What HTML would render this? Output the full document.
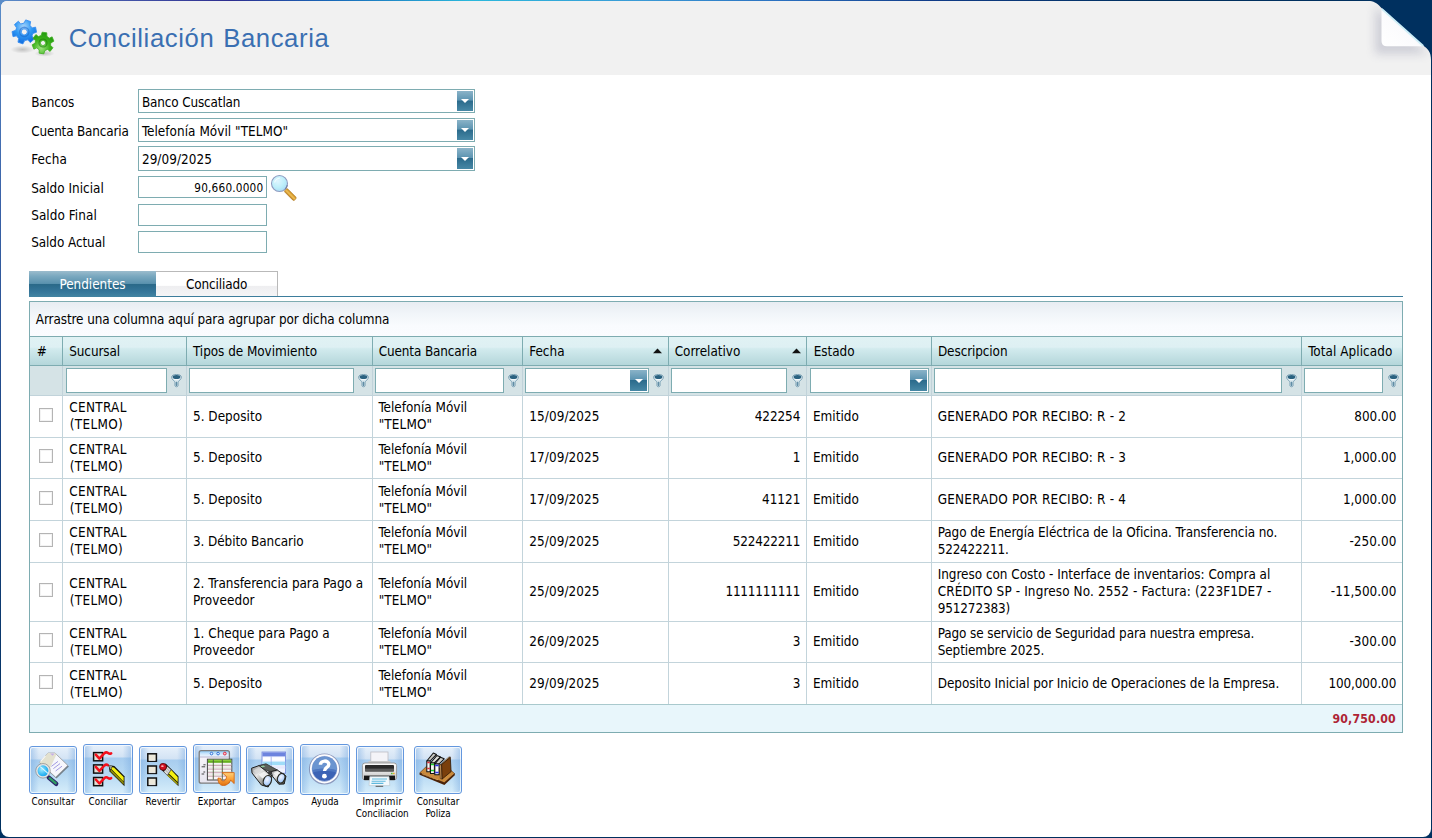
<!DOCTYPE html>
<html lang="es"><head><meta charset="utf-8"><title>Conciliación Bancaria</title>
<style>
html,body{margin:0;padding:0;}
body{background:#00305f;width:1432px;height:838px;overflow:hidden;font-family:"DejaVu Sans Condensed","Liberation Sans",sans-serif;font-size:13px;color:#000;}
#pg{position:relative;width:1432px;height:838px;overflow:hidden;}
#pg div,#pg span.t,#pg svg{position:absolute;}
#pg div{box-sizing:border-box;}
span.t{white-space:nowrap;}
.ed{border:1px solid #7eacb1;background:#fff;}
.ddb{background:linear-gradient(#8ab3c8 0%,#5c94b1 46%,#2b6b8c 50%,#4788a6 100%);}
.ddb:after{content:"";position:absolute;left:50%;top:50%;margin:-2px 0 0 -4px;border:4px solid transparent;border-top:4px solid #fff;border-bottom:0;}
.hl{background:#7eacb1;}
.vl{background:#c3d4db;}
.cb{border:1px solid #b4b4b4;background:#fff;box-shadow:inset 0 0 0 1px #f3f3f3;}
.btn{border:1px solid #6397de;border-radius:3px;box-shadow:inset 0 0 0 1px rgba(255,255,255,.5);background:linear-gradient(#e6f0fa 0px,#d3e3f4 12px,#a8cdef 13px,#b7d9f3 60%,#d6edfa 100%);}
.btn:before{content:"";position:absolute;left:1px;right:1px;top:1px;bottom:1px;background:linear-gradient(90deg,rgba(120,170,225,.45),rgba(255,255,255,0) 18%,rgba(255,255,255,0) 82%,rgba(120,170,225,.45));border-radius:2px;}

</style></head>
<body>
<div id="pg">
<div style="left:0;top:0;width:1432px;height:1px;background:linear-gradient(90deg,#5a8cc8 0px,#4a62b0 90px,#2e2e90 230px,#1868b8 330px,#2ab8dc 470px,#3a9ad6 640px,#2a70c0 780px,#103c88 930px,#00305f 1150px)"></div>
<div style="left:0;top:0;width:8px;height:8px;background:#5a8cc8"></div>
<div style="left:0;top:1px;width:1px;height:837px;background:linear-gradient(#5a8cc8 0px,#3a62a8 200px,#1a4482 450px,#00305f 760px)"></div>
<div style="left:1px;top:1px;width:1430px;height:836px;background:#fff;border-radius:6px 0 8px 8px;overflow:hidden"><div style="left:0;top:0;width:1430px;height:74px;background:#f1f1f1"></div></div>
<svg style="left:1342px;top:0" width="90" height="80" viewBox="1342 0 90 80">
<defs>
<filter id="cbl" x="-50%" y="-50%" width="200%" height="200%"><feGaussianBlur stdDeviation="5"/></filter>
<clipPath id="ccp"><path d="M1342 1 L1370 1 C1375 1.5 1378 4 1382 8.5 L1423 45.5 C1428 49 1431 52 1431 60 L1431 80 L1342 80 Z"/></clipPath>
<linearGradient id="cf" x1="0" y1="1" x2="1" y2="0"><stop offset="0" stop-color="#ffffff"/><stop offset=".45" stop-color="#fbfbfd"/><stop offset=".8" stop-color="#eceef5"/><stop offset="1" stop-color="#dfe6f0"/></linearGradient>
</defs>
<path d="M1371 0 L1432 0 L1432 60 L1431 60 C1431 52 1428 49 1423 45.5 L1382 8.5 C1378 4 1375 1.5 1370 1 Z" fill="#00305f"/>
<g clip-path="url(#ccp)"><path d="M1375 6 L1428 54 L1375 54 Z" fill="#8486a0" opacity=".31" filter="url(#cbl)"/></g>
<path d="M1381.5 8.5 L1423.5 46.3 L1387 46.3 Q1381.5 46.3 1381.5 41 Z" fill="url(#cf)"/>
<path d="M1381.8 8.8 L1423.3 46" stroke="#cdeef7" stroke-width="1.8" fill="none"/>
</svg>
<svg style="left:6.6px;top:15px" width="52" height="46" viewBox="0 0 52 46">
<defs>
<radialGradient id="gb" cx=".4" cy=".3" r=".8"><stop offset="0" stop-color="#a8d4fb"/><stop offset=".45" stop-color="#2f9af5"/><stop offset="1" stop-color="#0a5fd8"/></radialGradient>
<radialGradient id="gg" cx=".45" cy=".75" r=".8"><stop offset="0" stop-color="#9be37c"/><stop offset=".5" stop-color="#3fb41e"/><stop offset="1" stop-color="#1d960c"/></radialGradient>
<radialGradient id="gs"><stop offset="0" stop-color="#000" stop-opacity=".2"/><stop offset="1" stop-color="#000" stop-opacity="0"/></radialGradient>
</defs>
<ellipse cx="15.5" cy="34.5" rx="12" ry="4" fill="url(#gs)"/>
<ellipse cx="37.5" cy="38.5" rx="10" ry="3.2" fill="url(#gs)"/>
<g transform="translate(17.3,16.9) rotate(19)">
<path id="gear" d="M-2.6,-11.8 L2.6,-11.8 L3.2,-8.1 L6.1,-6.3 L9.1,-8.2 L11.7,-3.7 L8.6,-1.3 L8.6,1.3 L11.7,3.7 L9.1,8.2 L6.1,6.3 L3.2,8.1 L2.6,11.8 L-2.6,11.8 L-3.2,8.1 L-6.1,6.3 L-9.1,8.2 L-11.7,3.7 L-8.6,1.3 L-8.6,-1.3 L-11.7,-3.7 L-9.1,-8.2 L-6.1,-6.3 L-3.2,-8.1 Z M0,-3 A3,3 0 1 0 0.01,-3 Z" fill="url(#gb)" fill-rule="evenodd" stroke="#3a8ff0" stroke-width=".8" stroke-linejoin="round"/>
<circle r="4.6" fill="none" stroke="#1b62c9" stroke-opacity=".55" stroke-width="1.4"/>
</g>
<g transform="translate(36,28) rotate(8) scale(.9)">
<path d="M-2.6,-11.8 L2.6,-11.8 L3.2,-8.1 L6.1,-6.3 L9.1,-8.2 L11.7,-3.7 L8.6,-1.3 L8.6,1.3 L11.7,3.7 L9.1,8.2 L6.1,6.3 L3.2,8.1 L2.6,11.8 L-2.6,11.8 L-3.2,8.1 L-6.1,6.3 L-9.1,8.2 L-11.7,3.7 L-8.6,1.3 L-8.6,-1.3 L-11.7,-3.7 L-9.1,-8.2 L-6.1,-6.3 L-3.2,-8.1 Z M0,-2.8 A2.8,2.8 0 1 0 0.01,-2.8 Z" fill="url(#gg)" fill-rule="evenodd" stroke="#3cae1f" stroke-width=".8" stroke-linejoin="round"/>
<circle r="4.4" fill="none" stroke="#157a08" stroke-opacity=".55" stroke-width="1.4"/>
</g>
</svg>
<span class="t" style="top:22px;font-size:25.7px;line-height:33px;font-family:'Liberation Sans',sans-serif;color:#3a6fb2;word-spacing:1.2px;letter-spacing:0.593px;left:68.66px;">Conciliación Bancaria</span>
<span class="t" style="top:94px;font-size:13.4px;line-height:17px;letter-spacing:-0.091px;left:31.20px;">Bancos</span>
<span class="t" style="top:123px;font-size:13.4px;line-height:17px;letter-spacing:-0.171px;left:31.20px;">Cuenta Bancaria</span>
<span class="t" style="top:151px;font-size:13.4px;line-height:17px;letter-spacing:0.086px;left:31.20px;">Fecha</span>
<span class="t" style="top:180px;font-size:13.4px;line-height:17px;letter-spacing:0.012px;left:31.20px;">Saldo Inicial</span>
<span class="t" style="top:207px;font-size:13.4px;line-height:17px;letter-spacing:0.070px;left:31.20px;">Saldo Final</span>
<span class="t" style="top:234px;font-size:13.4px;line-height:17px;letter-spacing:-0.075px;left:31.20px;">Saldo Actual</span>
<div class="ed" style="left:138px;top:89px;width:337px;height:24px"><div class="ddb" style="right:1px;top:1px;width:16px;height:20px"></div></div>
<span class="t" style="top:94px;font-size:13.4px;line-height:17px;letter-spacing:-0.137px;left:141.90px;">Banco Cuscatlan</span>
<div class="ed" style="left:138px;top:118px;width:337px;height:24px"><div class="ddb" style="right:1px;top:1px;width:16px;height:20px"></div></div>
<span class="t" style="top:123px;font-size:13.4px;line-height:17px;letter-spacing:0.046px;left:141.90px;">Telefonía Móvil "TELMO"</span>
<div class="ed" style="left:138px;top:146px;width:337px;height:25px"><div class="ddb" style="right:1px;top:1px;width:16px;height:21px"></div></div>
<span class="t" style="top:151px;font-size:13.4px;line-height:17px;letter-spacing:0.075px;left:141.90px;">29/09/2025</span>
<div class="ed" style="left:138px;top:176px;width:129px;height:22px"></div>
<div class="ed" style="left:138px;top:204px;width:129px;height:22px"></div>
<div class="ed" style="left:138px;top:231px;width:129px;height:22px"></div>
<span class="t" style="top:181px;font-size:11.7px;line-height:15px;letter-spacing:0.203px;right:1168.60px;">90,660.0000</span>
<svg style="left:268px;top:172px" width="32" height="32" viewBox="0 0 32 32">
<defs><radialGradient id="mg" cx=".4" cy=".35" r=".75"><stop offset="0" stop-color="#dff6ff"/><stop offset=".55" stop-color="#bdeffa"/><stop offset="1" stop-color="#a3d6f5"/></radialGradient>
<linearGradient id="mh" x1="0" y1="0" x2="1" y2="0"><stop offset="0" stop-color="#b97814"/><stop offset=".45" stop-color="#f1c25a"/><stop offset="1" stop-color="#c98a1c"/></linearGradient></defs>
<g transform="translate(17.4,17.6) rotate(-45)"><rect x="-2.2" y="0" width="4.4" height="14" rx="1.6" fill="url(#mh)" stroke="#a97622" stroke-width=".5"/></g>
<circle cx="11.5" cy="11.5" r="8" fill="url(#mg)" stroke="#8f9bc0" stroke-width="1.1"/><path d="M6.5 10.5 Q8 6.5 12 6" stroke="#fff" stroke-width="1.2" fill="none" opacity=".7"/><path d="M17.2 17.2 A8 8 0 0 0 19.3 13" stroke="#6a7090" stroke-width="1.2" fill="none" opacity=".7"/>
</svg>
<div style="left:29px;top:296px;width:1374px;height:1px;background:#3d7d9c"></div>
<div style="left:29px;top:271px;width:127px;height:26px;background:linear-gradient(#9bbccd 0%,#7aa8bf 20%,#5a92ae 48%,#2a6989 52%,#35769a 80%,#4384a2 100%)"></div>
<div style="left:156px;top:271px;width:122px;height:25px;border:1px solid #b9b9b9;border-bottom:0;border-left:0;background:linear-gradient(#fff 0%,#fff 56%,#eeeef0 58%,#f5f5f7 100%)"></div>
<span class="t" style="top:276px;font-size:13.4px;line-height:17px;color:#fff;letter-spacing:-0.023px;left:-107.51px;width:400px;text-align:center;">Pendientes</span>
<span class="t" style="top:276px;font-size:13.4px;line-height:17px;letter-spacing:-0.099px;left:16.65px;width:400px;text-align:center;">Conciliado</span>
<div style="left:29px;top:301px;width:1374px;height:432px;border:1px solid #7eacb1;background:#fff"></div>
<div style="left:30px;top:302px;width:1372px;height:34px;background:linear-gradient(#e8edf2 0%,#f1f5f9 35%,#f9fbfe 70%,#fafcff 100%)"></div>
<span class="t" style="top:311px;font-size:13.4px;line-height:17px;letter-spacing:-0.092px;left:35.80px;">Arrastre una columna aquí para agrupar por dicha columna</span>
<div style="left:30px;top:337px;width:1372px;height:28px;background:linear-gradient(#e0f2f4 0%,#def0f3 36%,#d2ebee 42%,#b4d6da 100%)"></div>
<div class="hl" style="left:30px;top:336px;width:1372px;height:1px"></div>
<div class="hl" style="left:30px;top:365px;width:1372px;height:1px"></div>
<div style="left:30px;top:366px;width:1372px;height:30px;background:#d5e3e6;border-bottom:1px solid #c1d3da"></div>
<div class="hl" style="left:62px;top:337px;width:1px;height:28px"></div>
<div style="left:62px;top:366px;width:1px;height:29px;background:#c1d3da"></div>
<div class="vl" style="left:62px;top:396px;width:1px;height:308px"></div>
<div class="hl" style="left:186px;top:337px;width:1px;height:28px"></div>
<div style="left:186px;top:366px;width:1px;height:29px;background:#c1d3da"></div>
<div class="vl" style="left:186px;top:396px;width:1px;height:308px"></div>
<div class="hl" style="left:372px;top:337px;width:1px;height:28px"></div>
<div style="left:372px;top:366px;width:1px;height:29px;background:#c1d3da"></div>
<div class="vl" style="left:372px;top:396px;width:1px;height:308px"></div>
<div class="hl" style="left:522px;top:337px;width:1px;height:28px"></div>
<div style="left:522px;top:366px;width:1px;height:29px;background:#c1d3da"></div>
<div class="vl" style="left:522px;top:396px;width:1px;height:308px"></div>
<div class="hl" style="left:668px;top:337px;width:1px;height:28px"></div>
<div style="left:668px;top:366px;width:1px;height:29px;background:#c1d3da"></div>
<div class="vl" style="left:668px;top:396px;width:1px;height:308px"></div>
<div class="hl" style="left:806px;top:337px;width:1px;height:28px"></div>
<div style="left:806px;top:366px;width:1px;height:29px;background:#c1d3da"></div>
<div class="vl" style="left:806px;top:396px;width:1px;height:308px"></div>
<div class="hl" style="left:931px;top:337px;width:1px;height:28px"></div>
<div style="left:931px;top:366px;width:1px;height:29px;background:#c1d3da"></div>
<div class="vl" style="left:931px;top:396px;width:1px;height:308px"></div>
<div class="hl" style="left:1301px;top:337px;width:1px;height:28px"></div>
<div style="left:1301px;top:366px;width:1px;height:29px;background:#c1d3da"></div>
<div class="vl" style="left:1301px;top:396px;width:1px;height:308px"></div>
<span class="t" style="top:343px;font-size:13.4px;line-height:17px;left:36.70px;">#</span>
<span class="t" style="top:343px;font-size:13.4px;line-height:17px;letter-spacing:-0.073px;left:69.20px;">Sucursal</span>
<span class="t" style="top:343px;font-size:13.4px;line-height:17px;letter-spacing:-0.037px;left:192.95px;">Tipos de Movimiento</span>
<span class="t" style="top:343px;font-size:13.4px;line-height:17px;letter-spacing:-0.117px;left:378.70px;">Cuenta Bancaria</span>
<span class="t" style="top:343px;font-size:13.4px;line-height:17px;letter-spacing:0.023px;left:529.20px;">Fecha</span>
<span class="t" style="top:343px;font-size:13.4px;line-height:17px;letter-spacing:-0.027px;left:674.70px;">Correlativo</span>
<span class="t" style="top:343px;font-size:13.4px;line-height:17px;letter-spacing:-0.032px;left:813.70px;">Estado</span>
<span class="t" style="top:343px;font-size:13.4px;line-height:17px;letter-spacing:-0.092px;left:937.95px;">Descripcion</span>
<span class="t" style="top:343px;font-size:13.4px;line-height:17px;letter-spacing:0.059px;left:1308.20px;">Total Aplicado</span>
<svg style="left:652.5px;top:348px" width="9" height="6" viewBox="0 0 9 6"><path d="M0 5.2 L4.5 0.6 L9 5.2 Z" fill="#111"/></svg>
<svg style="left:791.5px;top:348px" width="9" height="6" viewBox="0 0 9 6"><path d="M0 5.2 L4.5 0.6 L9 5.2 Z" fill="#111"/></svg>
<div class="ed" style="left:66px;top:368px;width:101px;height:25px"></div>
<svg style="left:170.5px;top:374px" width="11" height="14" viewBox="0 0 11 14"><path d="M0.6 3.3 C0.6 1.4 2.8 0.5 5.5 0.5 C8.2 0.5 10.4 1.4 10.4 3.3 C10.4 5.6 7.1 6.6 7 8.6 L7 11.7 C7 13.1 4 13.1 4 11.7 L4 8.6 C3.9 6.6 0.6 5.6 0.6 3.3 Z" fill="#f3f8fa" stroke="#6a95ab" stroke-width=".9"/><ellipse cx="5.5" cy="3.1" rx="3.9" ry="2" fill="#2a6280"/><path d="M4.7 7.6 L6.3 7.6 L6.3 11.8 Q5.5 12.4 4.7 11.8 Z" fill="#5f8da5"/><path d="M2.2 5.4 Q5.5 7.4 8.8 5.4 L7 7.4 L4 7.4 Z" fill="#c9dde6"/></svg>
<div class="ed" style="left:189px;top:368px;width:165px;height:25px"></div>
<svg style="left:357.5px;top:374px" width="11" height="14" viewBox="0 0 11 14"><path d="M0.6 3.3 C0.6 1.4 2.8 0.5 5.5 0.5 C8.2 0.5 10.4 1.4 10.4 3.3 C10.4 5.6 7.1 6.6 7 8.6 L7 11.7 C7 13.1 4 13.1 4 11.7 L4 8.6 C3.9 6.6 0.6 5.6 0.6 3.3 Z" fill="#f3f8fa" stroke="#6a95ab" stroke-width=".9"/><ellipse cx="5.5" cy="3.1" rx="3.9" ry="2" fill="#2a6280"/><path d="M4.7 7.6 L6.3 7.6 L6.3 11.8 Q5.5 12.4 4.7 11.8 Z" fill="#5f8da5"/><path d="M2.2 5.4 Q5.5 7.4 8.8 5.4 L7 7.4 L4 7.4 Z" fill="#c9dde6"/></svg>
<div class="ed" style="left:375px;top:368px;width:129px;height:25px"></div>
<svg style="left:507.5px;top:374px" width="11" height="14" viewBox="0 0 11 14"><path d="M0.6 3.3 C0.6 1.4 2.8 0.5 5.5 0.5 C8.2 0.5 10.4 1.4 10.4 3.3 C10.4 5.6 7.1 6.6 7 8.6 L7 11.7 C7 13.1 4 13.1 4 11.7 L4 8.6 C3.9 6.6 0.6 5.6 0.6 3.3 Z" fill="#f3f8fa" stroke="#6a95ab" stroke-width=".9"/><ellipse cx="5.5" cy="3.1" rx="3.9" ry="2" fill="#2a6280"/><path d="M4.7 7.6 L6.3 7.6 L6.3 11.8 Q5.5 12.4 4.7 11.8 Z" fill="#5f8da5"/><path d="M2.2 5.4 Q5.5 7.4 8.8 5.4 L7 7.4 L4 7.4 Z" fill="#c9dde6"/></svg>
<div class="ed" style="left:671px;top:368px;width:116px;height:25px"></div>
<svg style="left:792px;top:374px" width="11" height="14" viewBox="0 0 11 14"><path d="M0.6 3.3 C0.6 1.4 2.8 0.5 5.5 0.5 C8.2 0.5 10.4 1.4 10.4 3.3 C10.4 5.6 7.1 6.6 7 8.6 L7 11.7 C7 13.1 4 13.1 4 11.7 L4 8.6 C3.9 6.6 0.6 5.6 0.6 3.3 Z" fill="#f3f8fa" stroke="#6a95ab" stroke-width=".9"/><ellipse cx="5.5" cy="3.1" rx="3.9" ry="2" fill="#2a6280"/><path d="M4.7 7.6 L6.3 7.6 L6.3 11.8 Q5.5 12.4 4.7 11.8 Z" fill="#5f8da5"/><path d="M2.2 5.4 Q5.5 7.4 8.8 5.4 L7 7.4 L4 7.4 Z" fill="#c9dde6"/></svg>
<div class="ed" style="left:934px;top:368px;width:348px;height:25px"></div>
<svg style="left:1286px;top:374px" width="11" height="14" viewBox="0 0 11 14"><path d="M0.6 3.3 C0.6 1.4 2.8 0.5 5.5 0.5 C8.2 0.5 10.4 1.4 10.4 3.3 C10.4 5.6 7.1 6.6 7 8.6 L7 11.7 C7 13.1 4 13.1 4 11.7 L4 8.6 C3.9 6.6 0.6 5.6 0.6 3.3 Z" fill="#f3f8fa" stroke="#6a95ab" stroke-width=".9"/><ellipse cx="5.5" cy="3.1" rx="3.9" ry="2" fill="#2a6280"/><path d="M4.7 7.6 L6.3 7.6 L6.3 11.8 Q5.5 12.4 4.7 11.8 Z" fill="#5f8da5"/><path d="M2.2 5.4 Q5.5 7.4 8.8 5.4 L7 7.4 L4 7.4 Z" fill="#c9dde6"/></svg>
<div class="ed" style="left:1304px;top:368px;width:79px;height:25px"></div>
<svg style="left:1387.5px;top:374px" width="11" height="14" viewBox="0 0 11 14"><path d="M0.6 3.3 C0.6 1.4 2.8 0.5 5.5 0.5 C8.2 0.5 10.4 1.4 10.4 3.3 C10.4 5.6 7.1 6.6 7 8.6 L7 11.7 C7 13.1 4 13.1 4 11.7 L4 8.6 C3.9 6.6 0.6 5.6 0.6 3.3 Z" fill="#f3f8fa" stroke="#6a95ab" stroke-width=".9"/><ellipse cx="5.5" cy="3.1" rx="3.9" ry="2" fill="#2a6280"/><path d="M4.7 7.6 L6.3 7.6 L6.3 11.8 Q5.5 12.4 4.7 11.8 Z" fill="#5f8da5"/><path d="M2.2 5.4 Q5.5 7.4 8.8 5.4 L7 7.4 L4 7.4 Z" fill="#c9dde6"/></svg>
<div class="ed" style="left:525px;top:368px;width:124px;height:25px"><div class="ddb" style="right:1px;top:1px;width:17px;height:21px"></div></div>
<div class="ed" style="left:810px;top:368px;width:119px;height:25px"><div class="ddb" style="right:1px;top:1px;width:17px;height:21px"></div></div>
<svg style="left:653px;top:374px" width="11" height="14" viewBox="0 0 11 14"><path d="M0.6 3.3 C0.6 1.4 2.8 0.5 5.5 0.5 C8.2 0.5 10.4 1.4 10.4 3.3 C10.4 5.6 7.1 6.6 7 8.6 L7 11.7 C7 13.1 4 13.1 4 11.7 L4 8.6 C3.9 6.6 0.6 5.6 0.6 3.3 Z" fill="#f3f8fa" stroke="#6a95ab" stroke-width=".9"/><ellipse cx="5.5" cy="3.1" rx="3.9" ry="2" fill="#2a6280"/><path d="M4.7 7.6 L6.3 7.6 L6.3 11.8 Q5.5 12.4 4.7 11.8 Z" fill="#5f8da5"/><path d="M2.2 5.4 Q5.5 7.4 8.8 5.4 L7 7.4 L4 7.4 Z" fill="#c9dde6"/></svg>
<div class="vl" style="left:30px;top:437px;width:1372px;height:1px"></div>
<div class="vl" style="left:30px;top:478px;width:1372px;height:1px"></div>
<div class="vl" style="left:30px;top:520px;width:1372px;height:1px"></div>
<div class="vl" style="left:30px;top:562px;width:1372px;height:1px"></div>
<div class="vl" style="left:30px;top:621px;width:1372px;height:1px"></div>
<div class="vl" style="left:30px;top:662px;width:1372px;height:1px"></div>
<div class="vl" style="left:30px;top:704px;width:1372px;height:1px"></div>
<div style="left:30px;top:704px;width:1372px;height:28px;background:#e8f6fb;border-top:1px solid #a9c9cd"></div>
<span class="t" style="top:711px;font-size:12.2px;line-height:16px;color:#ae2434;font-weight:bold;letter-spacing:0.189px;right:36.08px;">90,750.00</span>
<div class="cb" style="left:39px;top:408px;width:14px;height:14px"></div>
<span class="t" style="top:399px;font-size:13.4px;line-height:17px;letter-spacing:0.339px;left:69.20px;">CENTRAL</span>
<span class="t" style="top:416px;font-size:13.4px;line-height:17px;letter-spacing:0.323px;left:69.80px;">(TELMO)</span>
<span class="t" style="top:408px;font-size:13.4px;line-height:17px;letter-spacing:0.036px;left:192.95px;">5. Deposito</span>
<span class="t" style="top:399px;font-size:13.4px;line-height:17px;left:378.45px;">Telefonía Móvil</span>
<span class="t" style="top:416px;font-size:13.4px;line-height:17px;letter-spacing:0.120px;left:378.70px;">"TELMO"</span>
<span class="t" style="top:408px;font-size:13.4px;line-height:17px;letter-spacing:0.102px;left:529.20px;">15/09/2025</span>
<span class="t" style="top:408px;font-size:13.4px;line-height:17px;letter-spacing:-0.079px;right:631.78px;">422254</span>
<span class="t" style="top:408px;font-size:13.4px;line-height:17px;letter-spacing:0.010px;left:812.95px;">Emitido</span>
<span class="t" style="top:408px;font-size:13.4px;line-height:17px;letter-spacing:0.242px;left:937.70px;">GENERADO POR RECIBO: R - 2</span>
<span class="t" style="top:408px;font-size:13.4px;line-height:17px;letter-spacing:-0.019px;right:35.71px;">800.00</span>
<div class="cb" style="left:39px;top:449px;width:14px;height:14px"></div>
<span class="t" style="top:441px;font-size:13.4px;line-height:17px;letter-spacing:0.339px;left:69.20px;">CENTRAL</span>
<span class="t" style="top:458px;font-size:13.4px;line-height:17px;letter-spacing:0.323px;left:69.80px;">(TELMO)</span>
<span class="t" style="top:449px;font-size:13.4px;line-height:17px;letter-spacing:0.036px;left:192.95px;">5. Deposito</span>
<span class="t" style="top:441px;font-size:13.4px;line-height:17px;left:378.45px;">Telefonía Móvil</span>
<span class="t" style="top:458px;font-size:13.4px;line-height:17px;letter-spacing:0.120px;left:378.70px;">"TELMO"</span>
<span class="t" style="top:449px;font-size:13.4px;line-height:17px;letter-spacing:0.102px;left:529.20px;">17/09/2025</span>
<span class="t" style="top:449px;font-size:13.4px;line-height:17px;right:631.70px;">1</span>
<span class="t" style="top:449px;font-size:13.4px;line-height:17px;letter-spacing:0.010px;left:812.95px;">Emitido</span>
<span class="t" style="top:449px;font-size:13.4px;line-height:17px;letter-spacing:0.242px;left:937.70px;">GENERADO POR RECIBO: R - 3</span>
<span class="t" style="top:449px;font-size:13.4px;line-height:17px;letter-spacing:-0.039px;right:35.73px;">1,000.00</span>
<div class="cb" style="left:39px;top:491px;width:14px;height:14px"></div>
<span class="t" style="top:483px;font-size:13.4px;line-height:17px;letter-spacing:0.339px;left:69.20px;">CENTRAL</span>
<span class="t" style="top:500px;font-size:13.4px;line-height:17px;letter-spacing:0.323px;left:69.80px;">(TELMO)</span>
<span class="t" style="top:491px;font-size:13.4px;line-height:17px;letter-spacing:0.036px;left:192.95px;">5. Deposito</span>
<span class="t" style="top:483px;font-size:13.4px;line-height:17px;left:378.45px;">Telefonía Móvil</span>
<span class="t" style="top:500px;font-size:13.4px;line-height:17px;letter-spacing:0.120px;left:378.70px;">"TELMO"</span>
<span class="t" style="top:491px;font-size:13.4px;line-height:17px;letter-spacing:0.102px;left:529.20px;">17/09/2025</span>
<span class="t" style="top:491px;font-size:13.4px;line-height:17px;letter-spacing:-0.018px;right:631.71px;">41121</span>
<span class="t" style="top:491px;font-size:13.4px;line-height:17px;letter-spacing:0.010px;left:812.95px;">Emitido</span>
<span class="t" style="top:491px;font-size:13.4px;line-height:17px;letter-spacing:0.242px;left:937.70px;">GENERADO POR RECIBO: R - 4</span>
<span class="t" style="top:491px;font-size:13.4px;line-height:17px;letter-spacing:-0.039px;right:35.73px;">1,000.00</span>
<div class="cb" style="left:39px;top:533px;width:14px;height:14px"></div>
<span class="t" style="top:524px;font-size:13.4px;line-height:17px;letter-spacing:0.339px;left:69.20px;">CENTRAL</span>
<span class="t" style="top:541px;font-size:13.4px;line-height:17px;letter-spacing:0.323px;left:69.80px;">(TELMO)</span>
<span class="t" style="top:533px;font-size:13.4px;line-height:17px;letter-spacing:-0.075px;left:192.95px;">3. Débito Bancario</span>
<span class="t" style="top:524px;font-size:13.4px;line-height:17px;left:378.45px;">Telefonía Móvil</span>
<span class="t" style="top:541px;font-size:13.4px;line-height:17px;letter-spacing:0.120px;left:378.70px;">"TELMO"</span>
<span class="t" style="top:533px;font-size:13.4px;line-height:17px;letter-spacing:0.102px;left:529.20px;">25/09/2025</span>
<span class="t" style="top:533px;font-size:13.4px;line-height:17px;letter-spacing:-0.174px;right:631.87px;">522422211</span>
<span class="t" style="top:533px;font-size:13.4px;line-height:17px;letter-spacing:0.010px;left:812.95px;">Emitido</span>
<span class="t" style="top:524px;font-size:13.4px;line-height:17px;letter-spacing:-0.062px;left:937.70px;">Pago de Energía Eléctrica de la Oficina. Transferencia no.</span>
<span class="t" style="top:541px;font-size:13.4px;line-height:17px;letter-spacing:-0.188px;left:937.70px;">522422211.</span>
<span class="t" style="top:533px;font-size:13.4px;line-height:17px;letter-spacing:0.065px;right:35.63px;">-250.00</span>
<div class="cb" style="left:39px;top:583px;width:14px;height:14px"></div>
<span class="t" style="top:575px;font-size:13.4px;line-height:17px;letter-spacing:0.339px;left:69.20px;">CENTRAL</span>
<span class="t" style="top:592px;font-size:13.4px;line-height:17px;letter-spacing:0.323px;left:69.80px;">(TELMO)</span>
<span class="t" style="top:575px;font-size:13.4px;line-height:17px;letter-spacing:-0.031px;left:192.95px;">2. Transferencia para Pago a</span>
<span class="t" style="top:592px;font-size:13.4px;line-height:17px;letter-spacing:0.078px;left:192.95px;">Proveedor</span>
<span class="t" style="top:575px;font-size:13.4px;line-height:17px;left:378.45px;">Telefonía Móvil</span>
<span class="t" style="top:592px;font-size:13.4px;line-height:17px;letter-spacing:0.120px;left:378.70px;">"TELMO"</span>
<span class="t" style="top:583px;font-size:13.4px;line-height:17px;letter-spacing:0.102px;left:529.20px;">25/09/2025</span>
<span class="t" style="top:583px;font-size:13.4px;line-height:17px;letter-spacing:-0.193px;right:631.89px;">1111111111</span>
<span class="t" style="top:583px;font-size:13.4px;line-height:17px;letter-spacing:0.010px;left:812.95px;">Emitido</span>
<span class="t" style="top:566px;font-size:13.4px;line-height:17px;letter-spacing:-0.022px;left:937.70px;">Ingreso con Costo - Interface de inventarios: Compra al</span>
<span class="t" style="top:583px;font-size:13.4px;line-height:17px;letter-spacing:0.131px;left:937.70px;">CRÉDITO SP - Ingreso No. 2552 - Factura: (223F1DE7 -</span>
<span class="t" style="top:600px;font-size:13.4px;line-height:17px;letter-spacing:-0.118px;left:937.70px;">951272383)</span>
<span class="t" style="top:583px;font-size:13.4px;line-height:17px;letter-spacing:-0.017px;right:35.71px;">-11,500.00</span>
<div class="cb" style="left:39px;top:633px;width:14px;height:14px"></div>
<span class="t" style="top:625px;font-size:13.4px;line-height:17px;letter-spacing:0.339px;left:69.20px;">CENTRAL</span>
<span class="t" style="top:642px;font-size:13.4px;line-height:17px;letter-spacing:0.323px;left:69.80px;">(TELMO)</span>
<span class="t" style="top:625px;font-size:13.4px;line-height:17px;letter-spacing:-0.008px;left:192.95px;">1. Cheque para Pago a</span>
<span class="t" style="top:642px;font-size:13.4px;line-height:17px;letter-spacing:0.078px;left:192.95px;">Proveedor</span>
<span class="t" style="top:625px;font-size:13.4px;line-height:17px;left:378.45px;">Telefonía Móvil</span>
<span class="t" style="top:642px;font-size:13.4px;line-height:17px;letter-spacing:0.120px;left:378.70px;">"TELMO"</span>
<span class="t" style="top:633px;font-size:13.4px;line-height:17px;letter-spacing:0.102px;left:529.20px;">26/09/2025</span>
<span class="t" style="top:633px;font-size:13.4px;line-height:17px;right:631.70px;">3</span>
<span class="t" style="top:633px;font-size:13.4px;line-height:17px;letter-spacing:0.010px;left:812.95px;">Emitido</span>
<span class="t" style="top:625px;font-size:13.4px;line-height:17px;letter-spacing:-0.110px;left:937.70px;">Pago se servicio de Seguridad para nuestra empresa.</span>
<span class="t" style="top:642px;font-size:13.4px;line-height:17px;letter-spacing:-0.091px;left:937.70px;">Septiembre 2025.</span>
<span class="t" style="top:633px;font-size:13.4px;line-height:17px;letter-spacing:0.065px;right:35.63px;">-300.00</span>
<div class="cb" style="left:39px;top:675px;width:14px;height:14px"></div>
<span class="t" style="top:667px;font-size:13.4px;line-height:17px;letter-spacing:0.339px;left:69.20px;">CENTRAL</span>
<span class="t" style="top:684px;font-size:13.4px;line-height:17px;letter-spacing:0.323px;left:69.80px;">(TELMO)</span>
<span class="t" style="top:675px;font-size:13.4px;line-height:17px;letter-spacing:0.036px;left:192.95px;">5. Deposito</span>
<span class="t" style="top:667px;font-size:13.4px;line-height:17px;left:378.45px;">Telefonía Móvil</span>
<span class="t" style="top:684px;font-size:13.4px;line-height:17px;letter-spacing:0.120px;left:378.70px;">"TELMO"</span>
<span class="t" style="top:675px;font-size:13.4px;line-height:17px;letter-spacing:0.102px;left:529.20px;">29/09/2025</span>
<span class="t" style="top:675px;font-size:13.4px;line-height:17px;right:631.70px;">3</span>
<span class="t" style="top:675px;font-size:13.4px;line-height:17px;letter-spacing:0.010px;left:812.95px;">Emitido</span>
<span class="t" style="top:675px;font-size:13.4px;line-height:17px;letter-spacing:-0.044px;left:937.70px;">Deposito Inicial por Inicio de Operaciones de la Empresa.</span>
<span class="t" style="top:675px;font-size:13.4px;line-height:17px;letter-spacing:-0.116px;right:35.81px;">100,000.00</span>
<div class="btn" style="left:29px;top:746px;width:48px;height:48px"></div>
<div class="btn" style="left:83px;top:744px;width:50px;height:51px"></div>
<div class="btn" style="left:139px;top:746px;width:48px;height:48px"></div>
<div class="btn" style="left:193px;top:744px;width:48px;height:49px"></div>
<div class="btn" style="left:246px;top:746px;width:48px;height:48px"></div>
<div class="btn" style="left:300px;top:744px;width:50px;height:51px"></div>
<div class="btn" style="left:356px;top:746px;width:48px;height:48px"></div>
<div class="btn" style="left:414px;top:746px;width:48px;height:48px"></div>
<svg style="left:29px;top:744px" width="440" height="52" viewBox="29 744 440 52">
<defs>
<radialGradient id="lens" cx=".4" cy=".4" r=".7"><stop offset="0" stop-color="#9fe9ff"/><stop offset=".6" stop-color="#2fb6f2"/><stop offset="1" stop-color="#1c9be6"/></radialGradient>
<linearGradient id="pen" x1="0" y1="0" x2="1" y2="0"><stop offset="0" stop-color="#7d7a10"/><stop offset=".35" stop-color="#f4ee18"/><stop offset=".7" stop-color="#e2da10"/><stop offset="1" stop-color="#8b8510"/></linearGradient>
<linearGradient id="win" x1="0" y1="0" x2="0" y2="1"><stop offset="0" stop-color="#86c6f6"/><stop offset=".1" stop-color="#cfe8fc"/><stop offset=".2" stop-color="#f4f8fe"/><stop offset=".22" stop-color="#f6f4fa"/><stop offset="1" stop-color="#e6e4ee"/></linearGradient>
<linearGradient id="arr" x1="0" y1="0" x2="0" y2="1"><stop offset="0" stop-color="#ffd27a"/><stop offset=".5" stop-color="#fba23a"/><stop offset="1" stop-color="#e0700f"/></linearGradient>
<radialGradient id="hb" cx=".5" cy=".25" r=".85"><stop offset="0" stop-color="#86a9dc"/><stop offset=".55" stop-color="#4d78c4"/><stop offset="1" stop-color="#3a61b2"/></radialGradient>
<linearGradient id="prn" x1="0" y1="0" x2="0" y2="1"><stop offset="0" stop-color="#fdfdfd"/><stop offset=".5" stop-color="#e4e4e4"/><stop offset="1" stop-color="#bdbdbd"/></linearGradient>
<linearGradient id="bar" x1="0" y1="0" x2="1" y2="1"><stop offset="0" stop-color="#8a8a8a"/><stop offset=".35" stop-color="#e8e8e8"/><stop offset=".7" stop-color="#8c8c86"/><stop offset="1" stop-color="#33332c"/></linearGradient>
<radialGradient id="bl" cx=".4" cy=".4" r=".7"><stop offset="0" stop-color="#f4f6ff"/><stop offset="1" stop-color="#8fbcf6"/></radialGradient>
</defs>
<!-- 1 Consultar -->
<g>
<path d="M48 753 L55 753 L68.2 765.6 L55.8 777.8 L39.6 762.6 Z" fill="#4a4a4a" opacity=".6" transform="translate(.7,.8)"/>
<path d="M48 753 L55 753 L67.8 765.4 L55.6 777.2 L39.5 762.4 Z" fill="#f6f7fc" stroke="#8a8a8a" stroke-width=".6"/>
<path d="M48 753 L55 753 L56.4 754.6 L49.6 769 L39.5 762.4 Z" fill="#e3e1cf"/>
<path d="M45.4 755.8 L40.6 761.4" stroke="#fff" stroke-width="1.2" opacity=".8"/>
<path d="M50 753.4 L52.6 755.8 L54.6 753.6 Z" fill="#c4aeea"/>
<path d="M51.4 766.4 L58 761.4 M53.4 768.6 L60 763.6 M55.6 771 L62 766.2" stroke="#a39be0" stroke-width="1"/>
<path d="M48.8 777.6 L56.2 783.8" stroke="#2c246a" stroke-width="4.4" stroke-linecap="round"/>
<path d="M49.6 778.2 L55.6 783.2" stroke="#2f9c62" stroke-width="2.4" stroke-linecap="round"/>
<circle cx="43" cy="770.8" r="6.3" fill="url(#lens)" stroke="#e4e4e4" stroke-width="1.7"/>
<circle cx="43" cy="770.8" r="7.3" fill="none" stroke="#7e7e7e" stroke-width=".6"/>
<path d="M40.2 766.6 L48 773.4" stroke="#e8fbff" stroke-width="1.1" opacity=".9"/>
</g>
<!-- 2 Conciliar -->
<g>
<g fill="#e2dfd6" stroke="#101010" stroke-width="1.5"><rect x="93.6" y="752.6" width="9" height="8.2"/><rect x="93.6" y="764.9" width="9" height="8.2"/><rect x="93.6" y="777.5" width="9" height="8.2"/></g>
<g fill="none" stroke="#f4101c" stroke-width="2.5" stroke-linejoin="round" stroke-linecap="round">
<path d="M95.8 754.6 L99.4 758.6 L104.4 753.2 Q106.2 751.6 108 753 T111.2 753.2"/>
<path d="M95.8 766.9 L99.4 770.9 L104.4 765.5 Q106.2 763.9 108 765.2"/>
<path d="M95.8 779.5 L99.4 783.5 L104.4 778.1 Q106.2 776.5 108 777.9 T111.2 778.1"/>
</g>
<path d="M108.6 765 L114.4 766 L124.5 776.2 L124.5 786.2 L109.6 771.4 Z" fill="#14140a"/>
<path d="M111.8 767.2 L114 767.4 L123.6 777 L123.6 781.4 L111.4 769 Z" fill="#f4f010"/>
<path d="M111 769.6 L123.6 782 L123.6 784.6 L110.4 771.2 Z" fill="#a6a20c"/>
<path d="M110.8 770.4 L123.6 783.2" stroke="#5e5c08" stroke-width=".6"/>
<path d="M108.8 765.2 L112.2 766 L110.4 769.8 Z" fill="#9c9c92"/>
</g>
<!-- 3 Revertir -->
<g>
<g fill="#ece8da" stroke="#101010" stroke-width="1.5"><rect x="147.8" y="753.8" width="8.6" height="7.4"/><rect x="147.8" y="766" width="8.6" height="7.4"/><rect x="147.8" y="778" width="8.6" height="7.4"/></g>
<path d="M148.8 760.4 h6.6 M148.8 772.6 h6.6 M148.8 784.6 h6.6" stroke="#fff" stroke-width=".8"/>
<path d="M161 769.4 L165.6 763.6 L178.5 776.2 L178.5 786.2 Z" fill="#14140a"/>
<path d="M171.2 770 L177.7 776.9 L177.7 782 L168.8 773.4 Z" fill="#f4f010"/>
<path d="M168.2 774.2 L177.7 783 L177.7 785 L167.2 775.4 Z" fill="#a6a20c"/>
<path d="M167.4 766.4 L171 769.8 L167.2 775.2 L163.8 771.8 Z" fill="#dcdcdc" stroke="#555" stroke-width=".4"/>
<path d="M166.4 768 L169.4 771 M165.2 769.8 L168.2 772.8" stroke="#8a8a8a" stroke-width=".6"/>
<circle cx="163" cy="766.8" r="3.5" fill="#cf1020" stroke="#4a060c" stroke-width=".7"/>
<ellipse cx="162.4" cy="766.2" rx="1.3" ry=".9" fill="#ffb0b8"/>
</g>
<!-- 4 Exportar -->
<g>
<rect x="199.2" y="750.6" width="30.2" height="32.6" rx="2" fill="url(#win)" stroke="#7c7c7c" stroke-width="1.3"/>
<path d="M200 757 H228.8" stroke="#a9a3c4" stroke-width=".8"/>
<circle cx="211.5" cy="753.6" r="1.3" fill="#e8f2ff" stroke="#2f6fd8" stroke-width="1"/><circle cx="218.1" cy="753.6" r="1.3" fill="#e8f2ff" stroke="#2f6fd8" stroke-width="1"/><circle cx="224.8" cy="753.6" r="1.4" fill="#ffc2c2" stroke="#e22a44" stroke-width="1"/>
<path d="M201.6 766.8 h3.6 M203.4 764.8 h2.2 M201.6 774 h2.6 M203.4 772 h1.8" stroke="#444" stroke-width="1"/>
<rect x="207.4" y="759.2" width="24.4" height="20.8" fill="#fbf6f8" stroke="#444" stroke-width="1"/>
<rect x="207.9" y="759.6" width="23.4" height="3.2" fill="#62ac1e"/>
<path d="M208.4 760.6 h22.4" stroke="#9ad84a" stroke-width=".8"/>
<path d="M208 765.6 h23.4 M208 769.1 h23.4 M208 772.7 h23.4 M208 776.2 h23.4" stroke="#c9a3b3" stroke-width="1"/>
<path d="M208 764.4 h23.4 M208 767.9 h23.4 M208 771.5 h23.4 M208 775 h23.4" stroke="#d9ded0" stroke-width=".8"/>
<path d="M213.3 759.6 v20 M222.3 759.6 v20" stroke="#4a5a3a" stroke-width=".9"/>
<path d="M222 772.6 L234.2 772.6 L234.2 783.6 L230.6 780.2 C229 784.4 224.2 786.8 220.6 784.8 C218.6 783.6 217.8 780.8 218 778 L220.8 778.4 C221 780.8 222.6 781.8 224.4 780.8 C225.6 780 226.4 778.4 226.6 776.6 Z" fill="url(#arr)" stroke="#d0600a" stroke-width=".8" stroke-linejoin="round"/>
</g>
<!-- 5 Campos -->
<g>
<rect x="262" y="752" width="23.6" height="21.2" fill="#f2f4ff" stroke="#6f86dc" stroke-width=".8"/>
<rect x="262.4" y="752.4" width="22.8" height="4" fill="#6d84de"/>
<rect x="263" y="757.4" width="7.6" height="3" fill="#fff"/><rect x="272" y="757.4" width="12.6" height="3" fill="#fff"/>
<rect x="262.4" y="761.6" width="22.8" height="3.6" fill="#9fdcf8"/>
<rect x="262.4" y="766.2" width="22.8" height="2.4" fill="#e6e8fc"/>
<path d="M271.2 756.4 v16.4" stroke="#8f9fe6" stroke-width=".6"/>
<path d="M258.6 765.6 L266 763.8 L277.4 770 L271 772 L264 769.4 Z" fill="#5c5f5a" stroke="#2a2a2a" stroke-width=".8" stroke-linejoin="round"/>
<path d="M259.8 766.4 L263.4 765.4 L265.4 766.6 L261.6 767.8 Z" fill="#8fc79a"/>
<path d="M251.6 768.2 L259 765.6 L272.2 776 L268.2 787 L261.4 785 L252 773 Z" fill="url(#bar)" stroke="#1e1e1e" stroke-width="1" stroke-linejoin="round"/>
<path d="M253.4 770.4 L258.6 768 L262 771 L256.6 774 Z" fill="#d9d9d9" opacity=".8"/>
<path d="M258.6 774.6 L264.2 771.4 L268.4 774.6 L262.4 778.4 Z" fill="#f4f4f4" opacity=".9"/>
<path d="M271 771.6 L277.2 770 L286 776 L284.2 784 L278.8 784.2 L272.4 776.2 Z" fill="url(#bar)" stroke="#1e1e1e" stroke-width="1" stroke-linejoin="round"/>
<path d="M273.4 773 L277.4 771.6 L281.4 774.4 L276.6 776.8 Z" fill="#f4f4f4" opacity=".9"/>
<circle cx="270" cy="772.8" r="2" fill="#3a3a3a"/>
<ellipse cx="267.4" cy="780.8" rx="3.9" ry="5.4" transform="rotate(22 267.4 780.8)" fill="url(#bl)" stroke="#26261e" stroke-width="1.2"/>
<ellipse cx="281.2" cy="778.2" rx="3.6" ry="4.9" transform="rotate(22 281.2 778.2)" fill="url(#bl)" stroke="#26261e" stroke-width="1.2"/>
</g>
<!-- 6 Ayuda -->
<g>
<clipPath id="hcp"><circle cx="324.5" cy="768.8" r="12.4"/></clipPath>
<circle cx="324.5" cy="769" r="15.6" fill="#7c84ad" opacity=".8"/>
<circle cx="324.5" cy="768.8" r="14.6" fill="#fdfdff"/>
<circle cx="324.5" cy="768.8" r="12.6" fill="#3c63b5" stroke="#c4cde6" stroke-width=".6"/>
<g clip-path="url(#hcp)"><path d="M310 755 H339 V771 Q324.5 765.8 310 771 Z" fill="#6a94d0"/><path d="M310 771 Q324.5 765.8 339 771 L339 773 Q324.5 768.6 310 773 Z" fill="#5580c6" opacity=".7"/></g>
<path d="M320.4 764.8 C320.4 760 328.8 759.8 328.8 764.4 C328.8 767.6 324.6 767.2 324.5 771" fill="none" stroke="#fff" stroke-width="3.4"/>
<circle cx="324.4" cy="776.2" r="2.4" fill="#fff"/>
</g>
<!-- 7 Imprimir -->
<g>
<rect x="370.8" y="752" width="17.2" height="12" fill="#f4f4f8" stroke="#bdbdc4" stroke-width=".8"/>
<path d="M368.4 761 h22 v3 h-22 z" fill="#c8c8c8"/>
<rect x="362.4" y="763" width="34.2" height="17" rx="2.6" fill="url(#prn)" stroke="#8a8a8a" stroke-width=".8"/>
<rect x="365" y="765" width="29" height="6.4" rx="1" fill="#2a2a2a"/>
<path d="M365 768.6 h29 v2.8 h-29 z" fill="#5b5b5b"/>
<rect x="364" y="775.6" width="31" height="4.4" fill="#161616"/>
<rect x="391" y="772.8" width="1.6" height="1.4" fill="#56c23a"/><rect x="393" y="772.8" width="1.6" height="1.4" fill="#f3b21c"/>
<path d="M369.8 776.6 h19.2 l.8 9 h-20.8 z" fill="#f2f9fd" stroke="#b8c4cc" stroke-width=".6"/>
<path d="M372 779 h15 M371.6 781.2 h14 M371.4 783.4 h12" stroke="#5fb9de" stroke-width="1.1"/>
<path d="M375.6 785.8 h7.6 v1 h-7.6 z" fill="#555"/>
</g>
<!-- 8 Consultar Poliza -->
<g stroke-linejoin="round">
<path d="M419.8 772.8 L426.6 766.2 L451.4 770.8 L454.6 773.6 L444.3 782.8 Z" fill="#c98a3c" stroke="#5a2c0a" stroke-width=".6"/>
<path d="M419.6 772.8 L444.3 782.4 L454.8 773.2 L454.8 775.2 L444.4 785 L419.6 774.8 Z" fill="#4a2206"/>
<path d="M422 773.6 q1.6 1.6 3.2 1.2 q1.6 1.6 3.2 1.2 q1.6 1.6 3.2 1.2 q1.6 1.6 3.2 1.2 q1.6 1.6 3.2 1.2" stroke="#e2a85a" stroke-width=".9" fill="none"/>
<g stroke="#111" stroke-width="1.05">
<path d="M426.8 761 L430 761 L436.5 754.4 L433.3 753 Z" fill="#c9c9c3"/>
<path d="M430.5 763 L434.3 763 L440.6 757 L436.8 755.6 Z" fill="#dcdcd6"/>
<path d="M434.8 764 L439 764 L444.2 758.8 L440.5 757.2 Z" fill="#cfcfc9"/>
<rect x="426.8" y="761" width="3.4" height="10.8" fill="#fafafa"/>
<rect x="430.5" y="763" width="3.9" height="10.4" fill="#fafafa"/>
<rect x="434.8" y="764" width="4.3" height="10.8" fill="#fafafa"/>
</g>
<path d="M427.2 762.4 h2.6 M427.2 768.6 h2.6" stroke="#d8343e" stroke-width="1.5"/>
<path d="M430.9 764.6 h3.1 M430.9 770.6 h3.1" stroke="#1fd02c" stroke-width="1.5"/>
<path d="M435.2 765.6 h3.5 M435.2 772.6 h3.5" stroke="#2a34e8" stroke-width="1.5"/>
<path d="M439.8 765 L449.1 756.8 L450.3 757.3 L441.6 764.5 Z" fill="#e8bc82" stroke="#2a1404" stroke-width=".5"/>
<path d="M439.8 765 L441.6 764.5 L442.1 779.1 L440.3 778.6 Z" fill="#dca666" stroke="#2a1404" stroke-width=".5"/>
<path d="M441.6 764.5 L450.3 757.3 L451.1 771.6 L442.1 779.1 Z" fill="#7a3f0c" stroke="#2a1404" stroke-width=".8"/>
</g>
</svg>
<span class="t" style="top:795px;font-size:9.8px;line-height:13px;letter-spacing:0.116px;left:-146.94px;width:400px;text-align:center;">Consultar</span>
<span class="t" style="top:795px;font-size:9.8px;line-height:13px;letter-spacing:0.065px;left:-91.97px;width:400px;text-align:center;">Conciliar</span>
<span class="t" style="top:795px;font-size:9.8px;line-height:13px;letter-spacing:0.010px;left:-37.00px;width:400px;text-align:center;">Revertir</span>
<span class="t" style="top:795px;font-size:9.8px;line-height:13px;letter-spacing:0.029px;left:16.71px;width:400px;text-align:center;">Exportar</span>
<span class="t" style="top:795px;font-size:9.8px;line-height:13px;letter-spacing:0.168px;left:70.38px;width:400px;text-align:center;">Campos</span>
<span class="t" style="top:795px;font-size:9.8px;line-height:13px;letter-spacing:0.101px;left:125.05px;width:400px;text-align:center;">Ayuda</span>
<span class="t" style="top:795px;font-size:9.8px;line-height:13px;letter-spacing:0.309px;left:182.45px;width:400px;text-align:center;">Imprimir</span>
<span class="t" style="top:807px;font-size:9.8px;line-height:13px;letter-spacing:0.005px;left:182.20px;width:400px;text-align:center;">Conciliacion</span>
<span class="t" style="top:795px;font-size:9.8px;line-height:13px;letter-spacing:0.053px;left:238.03px;width:400px;text-align:center;">Consultar</span>
<span class="t" style="top:807px;font-size:9.8px;line-height:13px;letter-spacing:-0.024px;left:237.99px;width:400px;text-align:center;">Poliza</span>
</div>
</body></html>
